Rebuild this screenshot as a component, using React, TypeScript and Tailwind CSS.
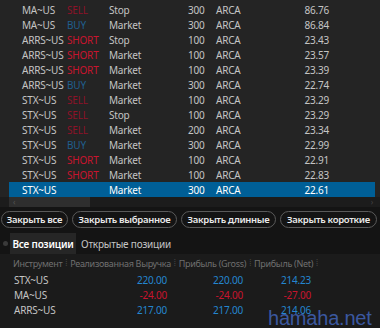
import React from 'react';

type Order = { sym: string; side: string; type: string; qty: number; price: string };

const orders: Order[] = [
  { sym: 'MA~US', side: 'SELL', type: 'Stop', qty: 300, price: '86.76' },
  { sym: 'MA~US', side: 'BUY', type: 'Market', qty: 300, price: '86.84' },
  { sym: 'ARRS~US', side: 'SHORT', type: 'Stop', qty: 100, price: '23.43' },
  { sym: 'ARRS~US', side: 'SHORT', type: 'Market', qty: 100, price: '23.57' },
  { sym: 'ARRS~US', side: 'SHORT', type: 'Market', qty: 100, price: '23.39' },
  { sym: 'ARRS~US', side: 'BUY', type: 'Market', qty: 300, price: '22.74' },
  { sym: 'STX~US', side: 'SELL', type: 'Market', qty: 100, price: '23.29' },
  { sym: 'STX~US', side: 'SELL', type: 'Stop', qty: 100, price: '23.29' },
  { sym: 'STX~US', side: 'SELL', type: 'Market', qty: 200, price: '23.34' },
  { sym: 'STX~US', side: 'BUY', type: 'Market', qty: 300, price: '22.99' },
  { sym: 'STX~US', side: 'SHORT', type: 'Market', qty: 100, price: '22.91' },
  { sym: 'STX~US', side: 'SHORT', type: 'Market', qty: 100, price: '22.83' },
  { sym: 'STX~US', side: '', type: 'Market', qty: 300, price: '22.61' },
];

const positions = [
  { sym: 'STX~US', real: '220.00', gross: '220.00', net: '214.23' },
  { sym: 'MA~US', real: '-24.00', gross: '-24.00', net: '-27.00' },
  { sym: 'ARRS~US', real: '217.00', gross: '217.00', net: '214.06' },
];

const buttons = [
  { t: 'Закрыть все', w: 'w-[67px]' },
  { t: 'Закрыть выбранное', w: 'w-[105px]' },
  { t: 'Закрыть длинные', w: 'w-[95px]' },
  { t: 'Закрыть короткие', w: 'w-[97px]' },
];

function sideClass(side: string) {
  if (side === 'SELL') return 'text-[#8e1228]';
  if (side === 'SHORT') return 'text-[#c8142e]';
  if (side === 'BUY') return 'text-[#1f5f8e]';
  return '';
}

function numClass(v: string) {
  return v.startsWith('-') ? 'text-[#c8142e]' : 'text-[#2486cf]';
}

const Sep = () => <span className="mx-[3px] text-[8px] leading-none text-[#4a4a4a]">⁞</span>;

export default function App() {
  return (
    <div
      className="relative h-[328px] w-[380px] overflow-hidden bg-[#141414] text-[10px] leading-none tracking-[-0.2px]"
      style={{ fontFamily: '"Noto Sans", "Open Sans", sans-serif' }}
    >
      {/* orders grid */}
      <div className="bg-[#242424] pt-[2px]">
        {orders.map((o, i) => {
          const sel = i === orders.length - 1;
          return (
            <div key={i} className="flex h-[15px] items-center pl-[9px] pr-[5px]">
              <div
                className={`flex h-full flex-1 items-center whitespace-nowrap ${sel ? 'bg-[#005f97] text-white' : 'text-[#c4c4c4]'}`}
              >
                <span className="w-[58px] pl-[13px]">{o.sym}</span>
                <span className={`w-[42px] ${sideClass(o.side)}`}>{o.side}</span>
                <span className="w-[79px]">{o.type}</span>
                <span className="w-[28px]">{o.qty}</span>
                <span className="w-[60px]">ARCA</span>
                <span className="w-[53px] text-right">{o.price}</span>
              </div>
            </div>
          );
        })}
        {/* horizontal scrollbar */}
        <div className="flex h-[10px] items-center bg-[#1c1c1c] pl-[9px] pr-[5px]">
          <div className="relative flex h-full flex-1 items-center">
            <div className="absolute left-0 top-0 h-full w-[81px] bg-[#2e2e2e]" />
            <span className="relative ml-[4px] text-[8px] text-[#555]">‹</span>
            <span className="relative ml-auto mr-[2px] text-[8px] text-[#444]">›</span>
          </div>
        </div>
      </div>

      {/* action buttons */}
      <div className="flex gap-[4px] px-[1px] pb-[5px] pt-[4px]">
        {buttons.map((b) => (
          <button
            key={b.t}
            className={`${b.w} flex h-[17px] items-center justify-center whitespace-nowrap rounded-full border border-[#5a5a5a] text-[9.5px] font-semibold tracking-[-0.3px] text-[#eaeaea]`}
          >
            {b.t}
          </button>
        ))}
      </div>

      {/* tabs */}
      <div className="flex h-[21px] items-stretch whitespace-nowrap">
        <div className="flex w-[10px] items-center justify-center">
          <span className="h-[5px] w-[5px] rounded-full bg-[#3a3a3a]" />
        </div>
        <div className="flex w-[66px] items-center justify-center bg-[#262626] text-[10px] font-semibold text-white">
          Все позиции
        </div>
        <div className="flex items-center pl-[5px] text-[10px] text-[#c4c4c4]">Открытые позиции</div>
      </div>

      {/* positions */}
      <div className="h-[75px] bg-[#1b1b1b]">
        <div className="flex h-[18px] items-center whitespace-nowrap pl-[13px] text-[9px] tracking-[-0.3px] text-[#6f6f6f]">
          <span>Инструмент</span>
          <Sep />
          <span>Реализованная Выручка</span>
          <Sep />
          <span>Прибыль (Gross)</span>
          <Sep />
          <span>Прибыль (Net)</span>
          <Sep />
        </div>
        {positions.map((p) => (
          <div key={p.sym} className="flex h-[15px] items-center whitespace-nowrap pl-[14px] text-[#c4c4c4]">
            <span className="w-[100px]">{p.sym}</span>
            <span className={`w-[53px] text-right ${numClass(p.real)}`}>{p.real}</span>
            <span className={`w-[76px] text-right ${numClass(p.gross)}`}>{p.gross}</span>
            <span className={`w-[68px] text-right ${numClass(p.net)}`}>{p.net}</span>
          </div>
        ))}
      </div>

      <div
        className="absolute left-[268px] top-[308px] whitespace-nowrap text-[20px] leading-none text-[#3f5fae] opacity-90"
        style={{ fontFamily: '"Liberation Sans", Arial, sans-serif' }}
      >
        hamaha.net
      </div>
    </div>
  );
}
